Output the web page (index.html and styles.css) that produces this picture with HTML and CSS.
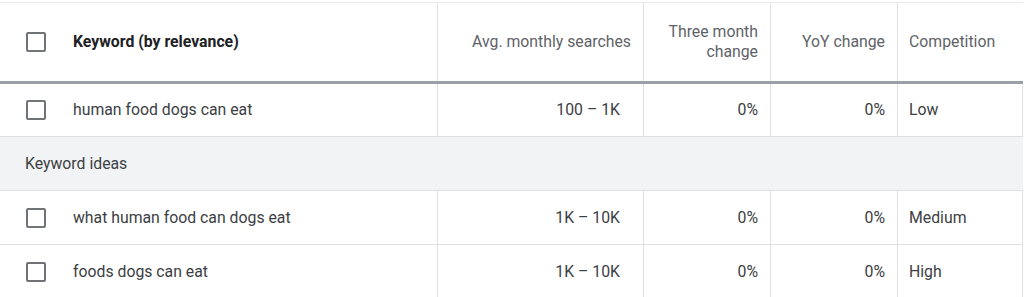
FILE: index.html
```html
<!DOCTYPE html>
<html>
<head>
<meta charset="utf-8">
<link rel="stylesheet" href="styles.css">
</head>
<body>
<div class="table">
  <div class="row head">
    <div class="cell kw"><span class="cb"></span><span class="kw-title">Keyword (by relevance)</span></div>
    <div class="cell num h">Avg. monthly searches</div>
    <div class="cell num h">Three month<br>change</div>
    <div class="cell num h">YoY change</div>
    <div class="cell txt h">Competition</div>
  </div>
  <div class="row body first">
    <div class="cell kw"><span class="cb"></span><span>human food dogs can eat</span></div>
    <div class="cell num wide">100 – 1K</div>
    <div class="cell num">0%</div>
    <div class="cell num">0%</div>
    <div class="cell txt">Low</div>
  </div>
  <div class="band">Keyword ideas</div>
  <div class="row body">
    <div class="cell kw"><span class="cb"></span><span>what human food can dogs eat</span></div>
    <div class="cell num wide">1K – 10K</div>
    <div class="cell num">0%</div>
    <div class="cell num">0%</div>
    <div class="cell txt">Medium</div>
  </div>
  <div class="row body last">
    <div class="cell kw"><span class="cb"></span><span>foods dogs can eat</span></div>
    <div class="cell num wide">1K – 10K</div>
    <div class="cell num">0%</div>
    <div class="cell num">0%</div>
    <div class="cell txt">High</div>
  </div>
</div>
</body>
</html>
```
FILE: styles.css
```css
html, body {
  margin: 0;
  padding: 0;
  background: #ffffff;
}
body {
  font-family: Roboto, "Liberation Sans", Arial, sans-serif;
  font-size: 15.8px;
  color: #3c4043;
}
.table {
  width: 1023px;
  margin-top: 2px;
  border-top: 1px solid #e8eaed;
}
.row {
  display: grid;
  grid-template-columns: 437px 206px 127px 127px 126px;
}
.head {
  height: 78px;
  border-bottom: 3px solid #9aa0a6;
}
.body {
  height: 53px;
  border-bottom: 1px solid #e0e0e0;
}
.first {
  height: 52px;
}
.last {
  border-bottom: none;
}
.cell {
  display: flex;
  align-items: center;
  box-sizing: border-box;
  line-height: 20px;
}
.cell + .cell {
  border-left: 1px solid #e0e0e0;
}
.body .cell:last-child {
  border-right: 1px solid #e0e0e0;
}
.kw {
  padding-left: 26px;
  gap: 27px;
}
.kw-title {
  font-weight: 700;
  color: #202124;
}
.num {
  justify-content: flex-end;
  text-align: right;
  padding-right: 12px;
}
.num.wide {
  padding-right: 23px;
}
.txt {
  padding-left: 11px;
}
.h {
  color: #5f6368;
}
.cb {
  display: inline-block;
  width: 20px;
  height: 20px;
  box-sizing: border-box;
  border: 2px solid #707377;
  border-radius: 2px;
  flex: none;
}
.band {
  height: 53px;
  background: #f1f3f4;
  border-bottom: 1px solid #e0e0e0;
  display: flex;
  align-items: center;
  padding-left: 25px;
}
```
